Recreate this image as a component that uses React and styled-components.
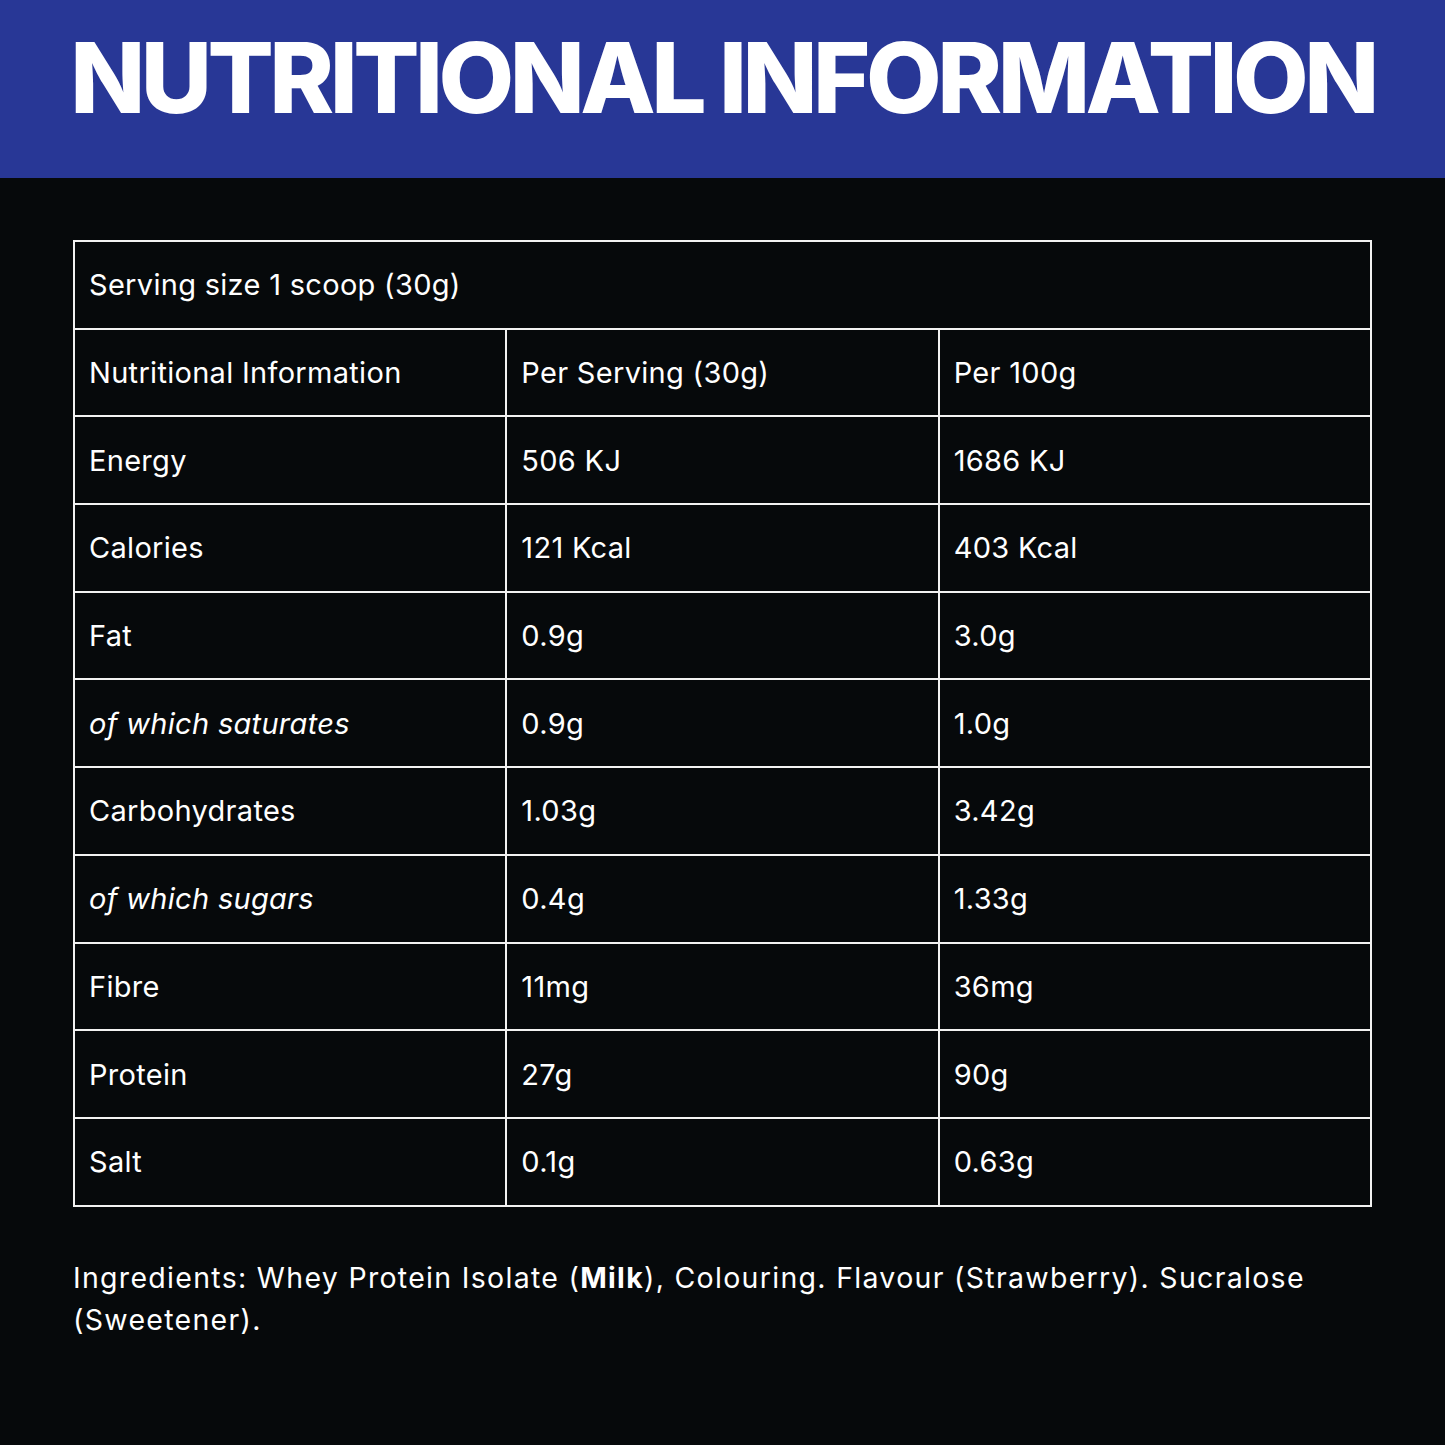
import React from 'react';
import styled, { createGlobalStyle } from 'styled-components';

const GlobalStyle = createGlobalStyle`
  html, body {
    margin: 0;
    padding: 0;
    background: #06090b;
  }
  body {
    font-family: 'Inter', 'Liberation Sans', sans-serif;
    color: #ffffff;
  }
`;

const Page = styled.div`
  width: 1445px;
  height: 1445px;
  background: #06090b;
  overflow: hidden;
`;

const Banner = styled.header`
  height: 178px;
  box-sizing: border-box;
  padding-bottom: 22px;
  background: #283796;
  display: flex;
  align-items: center;
  justify-content: center;
`;

const Title = styled.h1`
  margin: 0;
  font-family: 'Inter', 'Liberation Sans', sans-serif;
  font-weight: 800;
  font-size: 98px;
  letter-spacing: -4.5px;
  line-height: 1;
  color: #ffffff;
  white-space: nowrap;
`;

const Content = styled.main`
  padding: 62px 73px 0 73px;
`;

const Table = styled.table`
  width: 100%;
  border-collapse: collapse;
  table-layout: fixed;
  border: 2px solid #f2f2f2;
`;

const Cell = styled.td`
  height: 85.7px;
  padding: 0 14px;
  border: 2px solid #f2f2f2;
  font-size: 29px;
  letter-spacing: 0.3px;
  font-weight: 400;
  font-style: ${p => (p.$italic ? 'italic' : 'normal')};
  color: #ffffff;
  vertical-align: middle;
  white-space: nowrap;
`;

const Ingredients = styled.p`
  margin: 50px 0 0 0;
  font-size: 28.5px;
  letter-spacing: 1.3px;
  line-height: 42px;
  color: #ffffff;
  max-width: 1290px;

  strong {
    font-weight: 700;
  }
`;

const rows = [
  ['Nutritional Information', 'Per Serving (30g)', 'Per 100g'],
  ['Energy', '506 KJ', '1686 KJ'],
  ['Calories', '121 Kcal', '403 Kcal'],
  ['Fat', '0.9g', '3.0g'],
  ['of which saturates', '0.9g', '1.0g', true],
  ['Carbohydrates', '1.03g', '3.42g'],
  ['of which sugars', '0.4g', '1.33g', true],
  ['Fibre', '11mg', '36mg'],
  ['Protein', '27g', '90g'],
  ['Salt', '0.1g', '0.63g']
];

export default function App() {
  return (
    <Page>
      <GlobalStyle />
      <Banner>
        <Title>NUTRITIONAL INFORMATION</Title>
      </Banner>
      <Content>
        <Table>
          <tbody>
            <tr>
              <Cell colSpan={3}>Serving size 1 scoop (30g)</Cell>
            </tr>
            {rows.map(([name, serving, per100, italic]) => (
              <tr key={name}>
                <Cell $italic={italic}>{name}</Cell>
                <Cell>{serving}</Cell>
                <Cell>{per100}</Cell>
              </tr>
            ))}
          </tbody>
        </Table>
        <Ingredients>
          Ingredients: Whey Protein Isolate (<strong>Milk</strong>), Colouring.
          Flavour (Strawberry). Sucralose (Sweetener).
        </Ingredients>
      </Content>
    </Page>
  );
}
